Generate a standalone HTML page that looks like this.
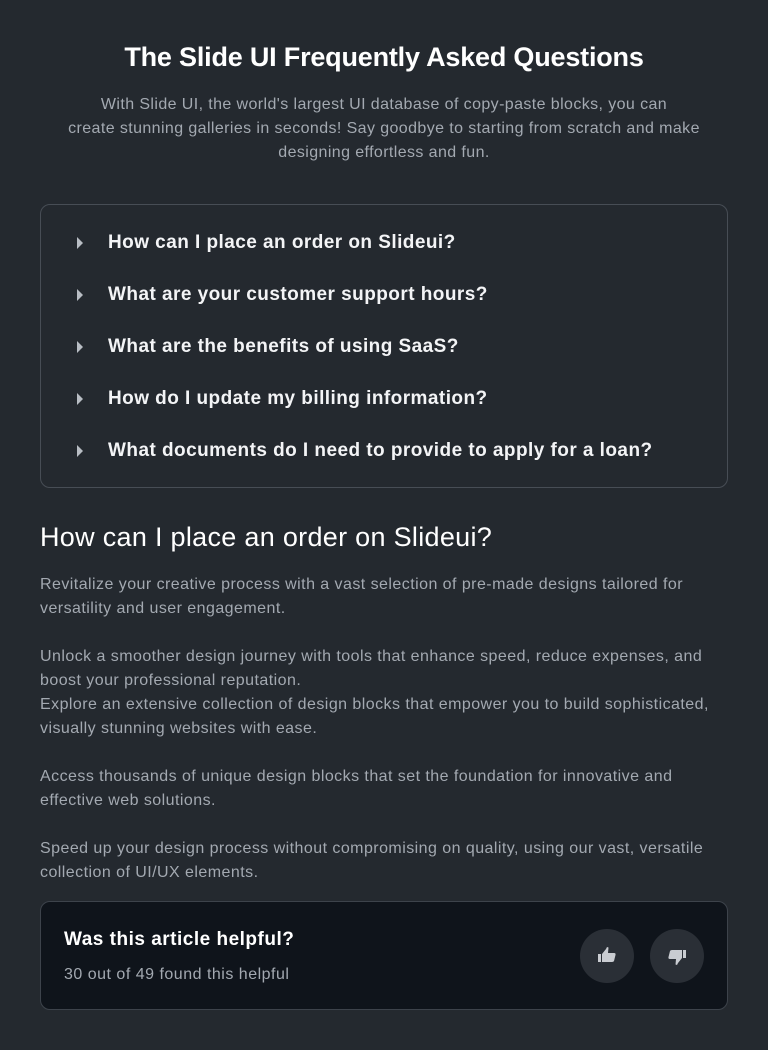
<!DOCTYPE html>
<html><head><meta charset="utf-8"><style>
*{margin:0;padding:0;box-sizing:border-box}
body{width:768px;height:1050px;background:#24292f;font-family:"Liberation Sans",sans-serif;color:#fff;overflow:hidden;position:relative}
h1{position:absolute;top:42px;left:0;width:768px;text-align:center;font-size:27px;font-weight:bold;letter-spacing:-0.2px}
.intro{position:absolute;top:93px;left:0;width:768px;text-align:center;font-size:16px;line-height:24px;color:#a3a9b1;letter-spacing:0.4px}
.faq{position:absolute;top:204px;left:40px;width:688px;height:284px;border:1px solid #474d55;border-radius:10px}
.q{position:absolute;left:67px;font-size:19px;font-weight:bold;color:#f3f4f6;letter-spacing:0.45px}
.tri{position:absolute;left:-31px;top:5px;width:0;height:0;border-left:6px solid #b8bdc4;border-top:6px solid transparent;border-bottom:6px solid transparent}
h2{position:absolute;top:522px;left:40px;font-size:27px;font-weight:normal;letter-spacing:0.3px}
.p{position:absolute;left:40px;width:720px;font-size:16px;line-height:24px;color:#a3a9b1;letter-spacing:0.45px}
.card{position:absolute;top:901px;left:40px;width:688px;height:109px;background:#0f141b;border:1px solid #3d434b;border-radius:10px}
.ct{position:absolute;left:23px;top:27px;font-size:19px;font-weight:bold;letter-spacing:0.5px}
.cs{position:absolute;left:23px;top:64px;font-size:16px;color:#a3a9b1;letter-spacing:0.5px}
.btn{position:absolute;top:27px;width:54px;height:54px;border-radius:50%;background:#2a2f36}
</style></head><body>
<h1>The Slide UI Frequently Asked Questions</h1>
<div class="intro">With Slide UI, the world's largest UI database of copy-paste blocks, you can<br>create stunning galleries in seconds! Say goodbye to starting from scratch and make<br>designing effortless and fun.</div>
<div class="faq">
<div class="q" style="top:27px"><span class="tri"></span>How can I place an order on Slideui?</div>
<div class="q" style="top:79px"><span class="tri"></span>What are your customer support hours?</div>
<div class="q" style="top:131px"><span class="tri"></span>What are the benefits of using SaaS?</div>
<div class="q" style="top:183px"><span class="tri"></span>How do I update my billing information?</div>
<div class="q" style="top:235px"><span class="tri"></span>What documents do I need to provide to apply for a loan?</div>
</div>
<h2>How can I place an order on Slideui?</h2>
<div class="p" style="top:573px">Revitalize your creative process with a vast selection of pre-made designs tailored for<br>versatility and user engagement.</div>
<div class="p" style="top:645px">Unlock a smoother design journey with tools that enhance speed, reduce expenses, and<br>boost your professional reputation.<br>Explore an extensive collection of design blocks that empower you to build sophisticated,<br>visually stunning websites with ease.</div>
<div class="p" style="top:765px">Access thousands of unique design blocks that set the foundation for innovative and<br>effective web solutions.</div>
<div class="p" style="top:837px">Speed up your design process without compromising on quality, using our vast, versatile<br>collection of UI/UX elements.</div>
<div class="card">
<div class="ct">Was this article helpful?</div>
<div class="cs">30 out of 49 found this helpful</div>
<div class="btn" style="left:539px"><svg width="54" height="54" viewBox="0 0 54 54"><g fill="#c9ccd1"><rect x="18" y="25" width="3" height="8"/><path d="M22 25 L26 20 L27 18 L28.5 18.5 L28 24 L34 24 Q36 24 35.5 26 L34 32 Q33.5 33 32 33 L22 33Z"/></g></svg></div>
<div class="btn" style="left:609px"><svg width="54" height="54" viewBox="0 0 54 54"><g fill="#c9ccd1" transform="rotate(180 27 27)"><rect x="18" y="25" width="3" height="8"/><path d="M22 25 L26 20 L27 18 L28.5 18.5 L28 24 L34 24 Q36 24 35.5 26 L34 32 Q33.5 33 32 33 L22 33Z"/></g></svg></div>
</div>
</body></html>
